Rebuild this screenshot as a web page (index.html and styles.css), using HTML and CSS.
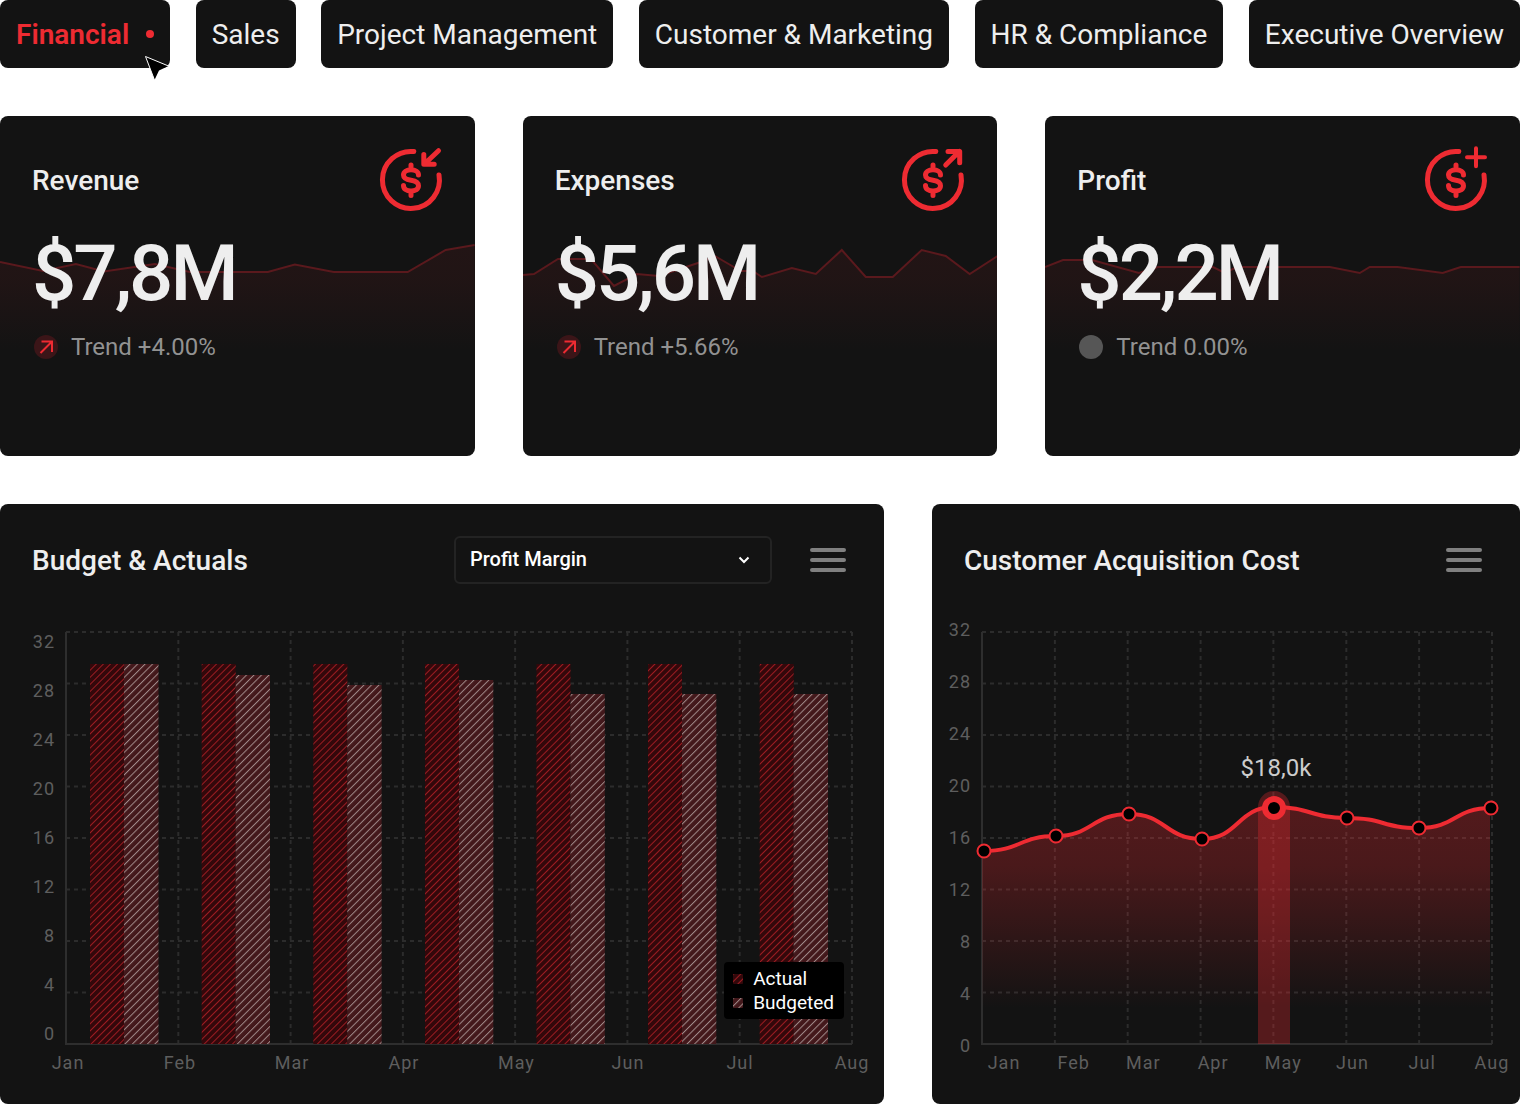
FILE: index.html
```html
<!DOCTYPE html>
<html lang="en">
<head>
<meta charset="utf-8">
<meta name="viewport" content="width=device-width, initial-scale=1">
<title>Financial dashboard</title>
<link rel="stylesheet" href="styles.css">
</head>
<body>
<nav class="tabs" aria-label="Dashboards">
  <a class="tab tab-active" href="#financial" aria-current="page">Financial<span class="tab-dot"></span>
    <svg class="cursor" width="26" height="28" viewBox="0 0 26 28" aria-hidden="true"><path d="M1.500 1.500 24.500 11 15 15.500 10.500 25Z" fill="#000"/><path d="M10.500 25 1.500 1.500 24.500 11" fill="none" stroke="#fff" stroke-width="1"/></svg>
  </a>
  <a class="tab" href="#sales">Sales</a>
  <a class="tab" href="#projects">Project Management</a>
  <a class="tab" href="#marketing">Customer &amp; Marketing</a>
  <a class="tab" href="#hr">HR &amp; Compliance</a>
  <a class="tab" href="#overview">Executive Overview</a>
</nav>

<main>
<svg class="defs" width="0" height="0" aria-hidden="true">
  <defs>
    <linearGradient id="spark-fade" gradientUnits="userSpaceOnUse" x1="0" y1="130" x2="0" y2="235">
      <stop offset="0" stop-color="#ee2b32" stop-opacity=".07"/>
      <stop offset=".35" stop-color="#ee2b32" stop-opacity=".06"/>
      <stop offset="1" stop-color="#ee2b32" stop-opacity="0"/>
    </linearGradient>
    <pattern id="hatch-actual" width="5" height="5" patternUnits="userSpaceOnUse" patternTransform="rotate(45)">
      <rect width="5" height="5" fill="#33080b"/><rect width="1" height="5" fill="#9c1c22"/>
    </pattern>
    <pattern id="hatch-budget" width="5.300" height="5.300" patternUnits="userSpaceOnUse" patternTransform="rotate(45)">
      <rect width="5.300" height="5.300" fill="#43181b"/><rect width="1" height="5.300" fill="#a08a8a"/>
    </pattern>
    <g id="coin" fill="none" stroke="#ee2b32" stroke-width="5" stroke-linecap="round">
      <path d="M34.800 3.600A28.500 28.500 0 1 0 60 27"/>
      <path d="M39.500 27c0-3-3-5.200-7.500-5.200s-7.500 2-7.500 5.200 3 4.500 7.500 5.200 7.500 2.300 7.500 5.600-3 5.200-7.500 5.200-7.500-2-7.500-5.500M32 21.500V17M32 43.500v4"/>
    </g>
    <g id="rise">
      <circle cx="14" cy="14" r="12" fill="#3b1518"/>
      <path d="M8.500 20 20 8.500M9.500 8.500H20V19" fill="none" stroke="#ee2b32" stroke-width="2"/>
    </g>
  </defs>
</svg>

<section class="metrics">
  <article class="card metric">
    <svg class="spark" viewBox="0 0 475 340" preserveAspectRatio="none" aria-hidden="true">
      <path d="M0 146 43 155 76 148 104 155.500 155 148 190 156H268L295 148.500 334 156H408L446 134 475 129V340H0Z" fill="url(#spark-fade)"/>
      <path d="M0 146 43 155 76 148 104 155.500 155 148 190 156H268L295 148.500 334 156H408L446 134 475 129" class="spark-line"/>
    </svg>
    <header class="metric-head"><h2>Revenue</h2>
      <svg width="64" height="64" viewBox="0 0 64 64" aria-hidden="true"><use href="#coin"/><path class="sign" d="M59.500 2.700 46 15.500M44.800 6.500V16.300H55.200"/></svg>
    </header>
    <p class="metric-value">$7,8M</p>
    <p class="trend"><svg width="28" height="28" viewBox="0 0 28 28" aria-hidden="true"><use href="#rise"/></svg>Trend +4.00%</p>
  </article>
  <article class="card metric">
    <svg class="spark" viewBox="0 0 475 340" preserveAspectRatio="none" aria-hidden="true">
      <path d="M0 159 11 158 35 143H68L91 170 114 158 136 160 178 146 192 140 218 155H230L239 161 269 152 293 158 319 134 343 161H370L399 134 423 140 447 158 475 140V340H0Z" fill="url(#spark-fade)"/>
      <path d="M0 159 11 158 35 143H68L91 170 114 158 136 160 178 146 192 140 218 155H230L239 161 269 152 293 158 319 134 343 161H370L399 134 423 140 447 158 475 140" class="spark-line"/>
    </svg>
    <header class="metric-head"><h2>Expenses</h2>
      <svg width="64" height="64" viewBox="0 0 64 64" aria-hidden="true"><use href="#coin"/><path class="sign" d="M44.700 17 58.500 3.300M47 3.500H58.700V14.800"/></svg>
    </header>
    <p class="metric-value">$5,6M</p>
    <p class="trend"><svg width="28" height="28" viewBox="0 0 28 28" aria-hidden="true"><use href="#rise"/></svg>Trend +5.66%</p>
  </article>
  <article class="card metric">
    <svg class="spark" viewBox="0 0 475 340" preserveAspectRatio="none" aria-hidden="true">
      <path d="M0 151 18 144H47L94 157 113 151H168L180 157 192 151H285L315 157 325 151H353L398 157 416 151H475V340H0Z" fill="url(#spark-fade)"/>
      <path d="M0 151 18 144H47L94 157 113 151H168L180 157 192 151H285L315 157 325 151H353L398 157 416 151H475" class="spark-line"/>
    </svg>
    <header class="metric-head"><h2>Profit</h2>
      <svg width="64" height="64" viewBox="0 0 64 64" aria-hidden="true"><use href="#coin"/><path class="sign sign-plus" d="M52 .3V18.300M43 9.300H61"/></svg>
    </header>
    <p class="metric-value">$2,2M</p>
    <p class="trend"><svg width="28" height="28" viewBox="0 0 28 28" aria-hidden="true"><circle cx="14" cy="14" r="12" fill="#565656"/></svg>Trend 0.00%</p>
  </article>
</section>

<section class="charts">
  <article class="card chart">
    <header class="chart-head">
      <h2>Budget &amp; Actuals</h2>
      <div class="picker">
        <select aria-label="Measure"><option>Profit Margin</option><option>Revenue</option></select>
        <svg width="12" height="8" viewBox="0 0 12 8" aria-hidden="true"><path d="M1.500 1.500 6 6l4.500-4.500" fill="none" stroke="#fff" stroke-width="2"/></svg>
      </div>
      <button class="menu" type="button" aria-label="Chart menu"><span></span><span></span><span></span></button>
    </header>
    <div class="chart-body">
      <div class="y-axis"><span>32</span><span>28</span><span>24</span><span>20</span><span>16</span><span>12</span><span>8</span><span>4</span><span>0</span></div>
      <svg class="plot" viewBox="0 0 788 414" role="img" aria-label="Actual and budgeted amounts by month">
        <g class="grid">
          <path d="M1 1H787M1 52.500H787M1 104H787M1 155.500H787M1 207H787M1 258.500H787M1 310H787M1 361.500H787"/>
          <path d="M113.300 1V413M225.600 1V413M337.900 1V413M450.100 1V413M562.400 1V413M674.700 1V413M787 1V413"/>
        </g>
        <path class="axis" d="M1 1V413H787"/>
        <g fill="url(#hatch-actual)">
          <path d="M25 33h34v380H25zM136.700 33h34v380h-34zM248.300 33h34v380h-34zM360 33h34v380h-34zM471.500 33h34v380h-34zM583 33h34v380h-34zM694.700 33h34v380h-34z"/>
        </g>
        <g fill="url(#hatch-budget)">
          <path d="M59 33h34.500v380H59zM170.700 44h34.300v369h-34.300zM282.300 54h34.300v359h-34.300zM394 49h34.300v364h-34.300zM505.500 63h34.300v350h-34.300zM617 63h34.300v350H617zM728.700 63h34.300v350h-34.300z"/>
        </g>
      </svg>
      <ul class="legend">
        <li><svg width="10" height="10" aria-hidden="true"><rect width="10" height="10" rx="1" fill="url(#hatch-actual)"/></svg>Actual</li>
        <li><svg width="10" height="10" aria-hidden="true"><rect width="10" height="10" rx="1" fill="url(#hatch-budget)"/></svg>Budgeted</li>
      </ul>
    </div>
    <div class="x-axis"><span>Jan</span><span>Feb</span><span>Mar</span><span>Apr</span><span>May</span><span>Jun</span><span>Jul</span><span>Aug</span></div>
  </article>

  <article class="card chart chart-cost">
    <header class="chart-head">
      <h2>Customer Acquisition Cost</h2>
      <button class="menu" type="button" aria-label="Chart menu"><span></span><span></span><span></span></button>
    </header>
    <div class="chart-body">
      <div class="y-axis"><span>32</span><span>28</span><span>24</span><span>20</span><span>16</span><span>12</span><span>8</span><span>4</span><span>0</span></div>
      <svg class="plot" viewBox="0 0 512 414" role="img" aria-label="Customer acquisition cost by month">
        <defs>
          <linearGradient id="area-fade" x1="0" y1="0" x2="0" y2="1">
            <stop offset="0" stop-color="#ee2b32" stop-opacity=".29"/>
            <stop offset=".25" stop-color="#ee2b32" stop-opacity=".25"/>
            <stop offset=".85" stop-color="#ee2b32" stop-opacity="0"/>
          </linearGradient>
        </defs>
        <g class="grid">
          <path d="M1 1H511M1 52.500H511M1 104H511M1 155.500H511M1 207H511M1 258.500H511M1 310H511M1 361.500H511"/>
          <path d="M73.900 1V413M146.700 1V413M219.600 1V413M292.400 1V413M365.300 1V413M438.100 1V413M511 1V413"/>
        </g>
        <path class="axis" d="M1 1V413H511"/>
        <path fill="url(#area-fade)" d="M1 220C38 220 38 205 75 205S111 183 148 183 184 208 221 208 256 176 293 176 329 187 366 187 401 197 438 197 473 177 509 177V413H1Z"/>
        <path fill="#ee2b32" fill-opacity=".3" d="M277 176a16 16 0 0 1 32 0V413H277Z"/>
        <path fill="none" stroke="#ee2b32" stroke-width="4" d="M3 220C39 220 39 205 75 205S111 183 148 183 184 208 221 208 256 176 293 176 329 187 366 187 401 197 438 197 473 177 510 177"/>
        <g fill="#000" stroke="#ee2b32" stroke-width="2">
          <circle cx="3" cy="220" r="6.500"/><circle cx="75" cy="205" r="6.500"/><circle cx="148" cy="183" r="6.500"/><circle cx="221" cy="208" r="6.500"/><circle cx="366" cy="187" r="6.500"/><circle cx="438" cy="197" r="6.500"/><circle cx="510" cy="177" r="6.500"/>
          <circle cx="293" cy="177" r="9" stroke-width="6"/>
        </g>
        <text class="point-value" x="295" y="145" text-anchor="middle">$18,0k</text>
      </svg>
    </div>
    <div class="x-axis"><span>Jan</span><span>Feb</span><span>Mar</span><span>Apr</span><span>May</span><span>Jun</span><span>Jul</span><span>Aug</span></div>
  </article>
</section>
</main>
</body>
</html>
```
FILE: styles.css
```css
* { box-sizing: border-box; }
body {
  margin: 0;
  background: #fff;
  color: #eee;
  font-family: Roboto, "Liberation Sans", sans-serif;
}
h2, p, ul { margin: 0; padding: 0; }
h2 { padding-top: 2px; font-size: 28px; line-height: 32px; font-weight: 500; }
.defs { position: absolute; }

.tabs { display: flex; justify-content: space-between; }
.tab {
  position: relative;
  display: flex;
  flex: none;
  align-items: center;
  height: 68px;
  padding: 0 16px;
  border-radius: 8px;
  background: #131313;
  color: #eee;
  font-size: 28px;
  white-space: nowrap;
  text-decoration: none;
}
.tab-active { color: #ee2b32; font-weight: 600; gap: 17px; }
.tab-dot { width: 8px; height: 8px; border-radius: 50%; background: currentColor; }
.cursor { position: absolute; right: 0; bottom: -15px; z-index: 1; }

.card { position: relative; border-radius: 8px; background: #131313; overflow: hidden; }

.metrics {
  display: grid;
  grid-template-columns: repeat(3, 1fr);
  gap: 48px;
  margin-top: 48px;
}
.metric { min-height: 340px; padding: 32px; }
.metric > * { position: relative; }
.metric > .spark { position: absolute; inset: 0; width: 100%; height: 340px; }
.spark-line { fill: none; stroke: #5a191d; stroke-width: 2; }
.metric-head { display: flex; justify-content: space-between; align-items: center; }
.metric-head svg { overflow: visible; }
.sign { fill: none; stroke: #ee2b32; stroke-width: 5; stroke-linecap: round; stroke-linejoin: round; }
.sign-plus { stroke-width: 4; }
.metric-value { margin-top: 18px; font-size: 78px; line-height: 88px; font-weight: 500; letter-spacing: -3px; }
.trend {
  display: flex;
  align-items: center;
  gap: 11px;
  margin-top: 15px;
  color: #929292;
  font-size: 24px;
  line-height: 28px;
}

.charts {
  display: grid;
  grid-template-columns: 884fr 588fr;
  gap: 48px;
  margin-top: 48px;
}
.chart { min-height: 600px; padding: 32px 0 24px; }
.chart-head { display: flex; align-items: center; height: 48px; padding: 0 32px; gap: 32px; }
.chart-head h2 { flex: 1; }
.picker { position: relative; width: 318px; }
.picker select {
  width: 100%;
  height: 48px;
  padding: 0 14px 2px;
  appearance: none;
  border: 2px solid #232323;
  border-radius: 6px;
  background: #131313;
  color: #fff;
  font: 500 20px Roboto, sans-serif;
}
.picker svg { position: absolute; right: 22px; top: 20px; pointer-events: none; }
.menu {
  display: flex;
  flex-direction: column;
  gap: 6px;
  padding: 6px;
  border: 0;
  background: none;
}
.menu span { width: 36px; height: 4px; border-radius: 2px; background: #808080; }

.chart-body { position: relative; display: flex; margin-top: 47px; padding-right: 31px; }
.y-axis, .x-axis {
  display: flex;
  justify-content: space-between;
  color: #5e5e5e;
  font-size: 18px;
  line-height: 20px;
  letter-spacing: 1px;
}
.y-axis { flex: none; flex-direction: column; width: 65px; padding: 1px 10px 1px 0; text-align: right; }
.plot { display: block; flex: 1; min-width: 0; overflow: visible; }
.grid { fill: none; stroke: #2c2c2c; stroke-width: 2; stroke-dasharray: 4 4; }
.axis { fill: none; stroke: #2e2e2e; stroke-width: 2; }
.x-axis { margin-top: 8px; padding: 0 14px 0 50px; }
.x-axis span { width: 36px; text-align: center; }
.chart-cost .chart-body { padding-right: 27px; }
.chart-cost .y-axis { width: 49px; margin: -12px 0; }
.chart-cost .x-axis { padding: 0 10px 0 54px; }
.point-value { fill: #ccc; font-size: 24px; }

.legend {
  position: absolute;
  right: 40px;
  bottom: 26px;
  padding: 5px 10px 4px 9px;
  border-radius: 4px;
  background: #000;
  color: #fff;
  font-size: 19px;
  line-height: 24px;
  list-style: none;
}
.legend li { display: flex; align-items: center; gap: 10px; }
```
